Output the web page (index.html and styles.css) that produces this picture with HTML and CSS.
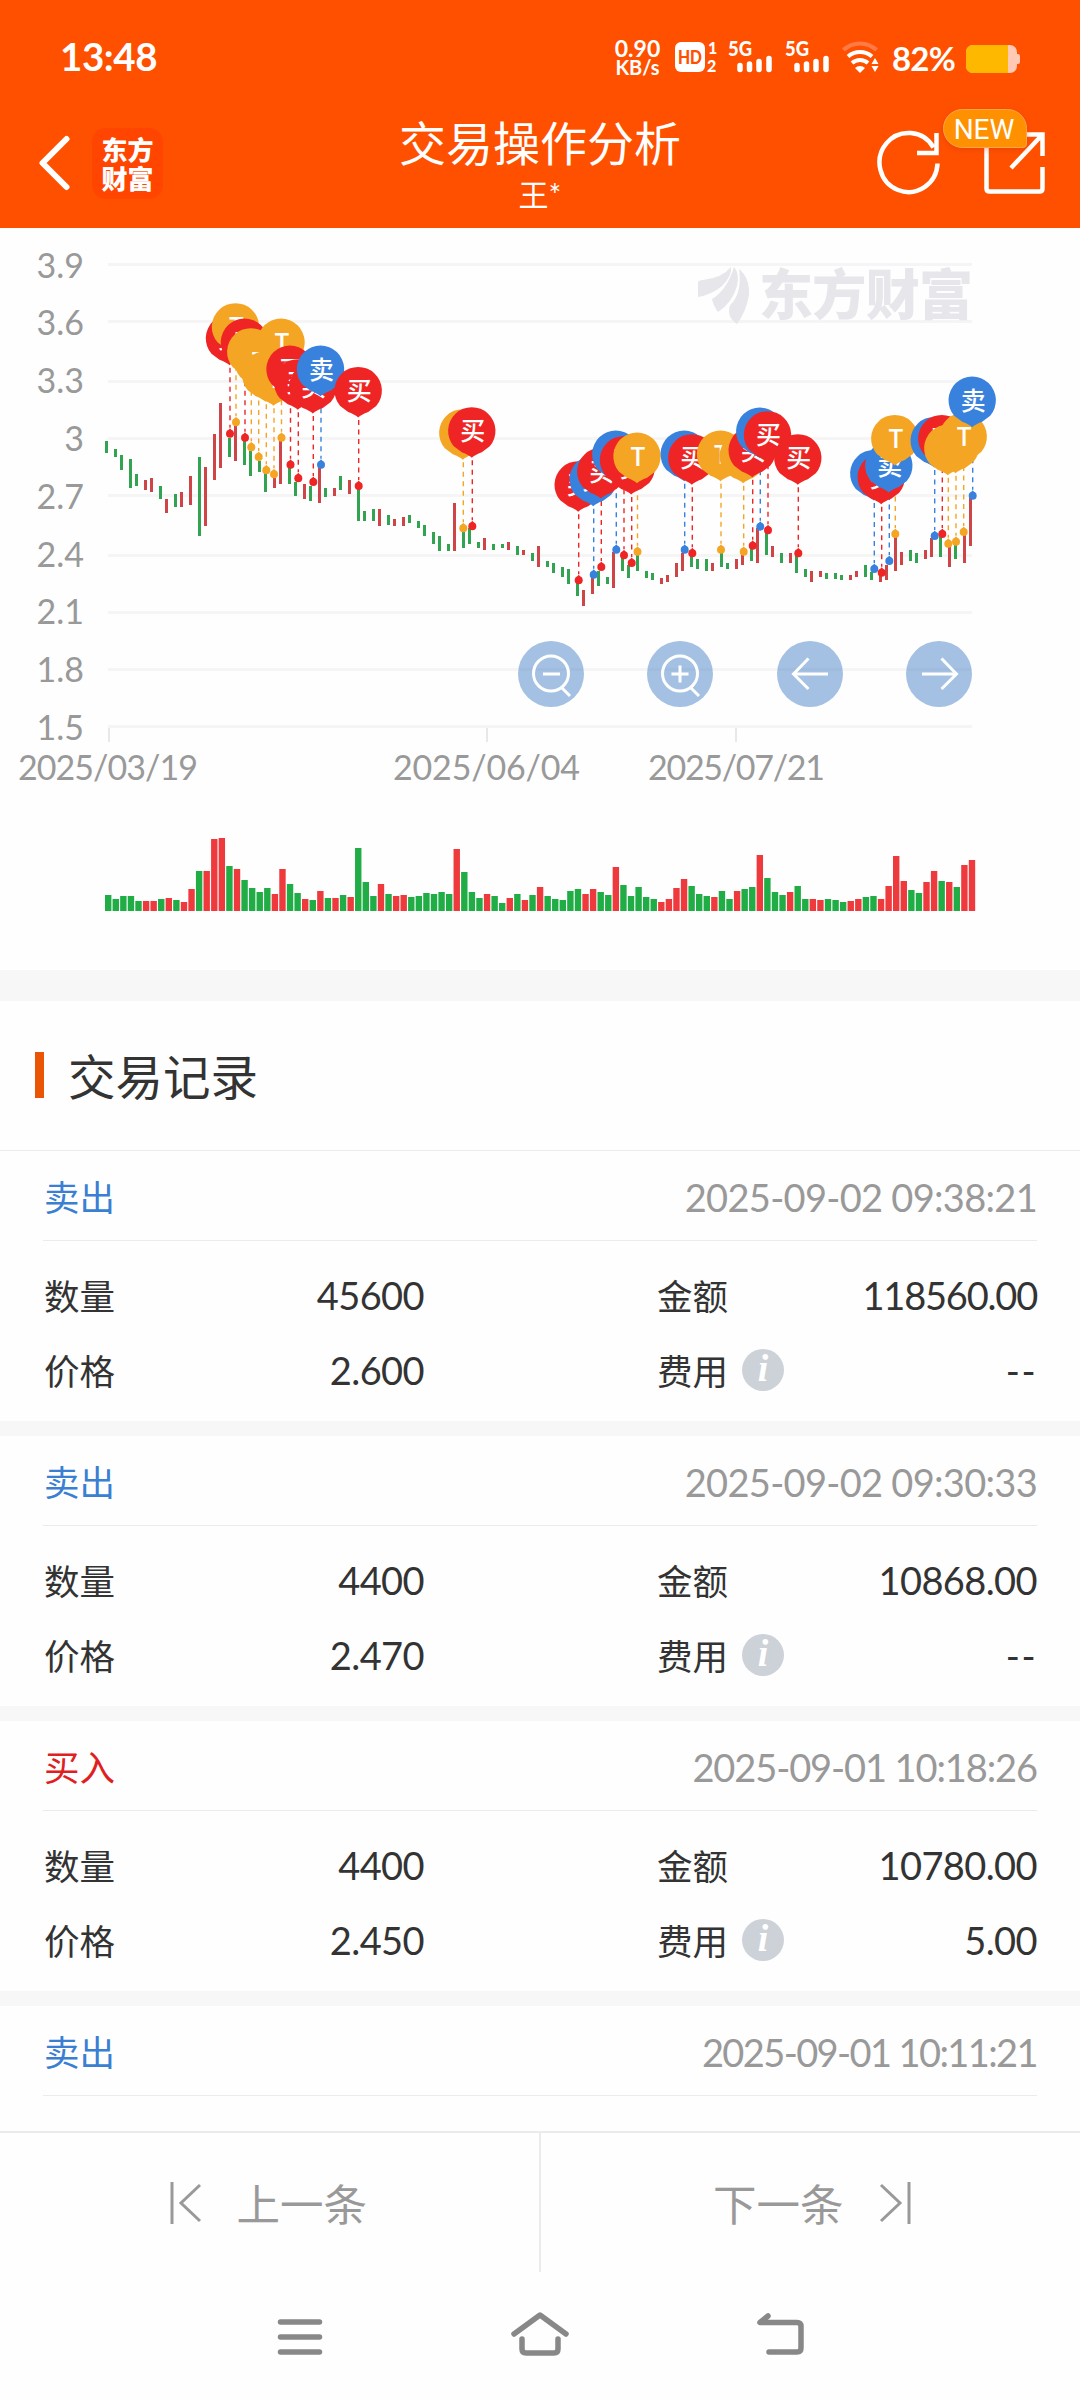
FILE: index.html
```
<!DOCTYPE html>
<html lang="zh-CN">
<head>
    <meta charset="UTF-8">
    <meta name="viewport" content="width=device-width, initial-scale=1.0">
    <link rel="stylesheet" href="styles.css">
    <title>交易操作分析</title>
</head>
<body>
    <header class="header">
        <div class="status-bar">
            <span class="time">13:48</span>
            <div class="status-icons">
                <div class="net-speed"><span>0.90</span><span class="unit">KB/s</span></div>
                <svg class="icon-hd" width="44" height="32" viewBox="0 0 44 32">
                    <rect x="0" y="1" width="30" height="30" rx="6" fill="#fff"/>
                    <text x="3" y="22.500" class="hd-text" textLength="24" lengthAdjust="spacingAndGlyphs">HD</text>
                    <text x="33" y="13" class="sim-text">1</text>
                    <text x="32" y="30.500" class="sim-text">2</text>
                </svg>
                <svg class="icon-signal" width="46" height="32" viewBox="0 0 46 32">
                    <text x="0" y="15" class="g5" textLength="24" lengthAdjust="spacingAndGlyphs">5G</text>
                    <path d="M12 24.500v4M21.500 23v5.500M31 20.500v8M41 17.500v11" stroke="#fff" stroke-width="5.500" stroke-linecap="round"/>
                </svg>
                <svg class="icon-signal" width="46" height="32" viewBox="0 0 46 32">
                    <text x="0" y="15" class="g5" textLength="24" lengthAdjust="spacingAndGlyphs">5G</text>
                    <path d="M12 24.500v4M21.500 23v5.500M31 20.500v8M41 17.500v11" stroke="#fff" stroke-width="5.500" stroke-linecap="round"/>
                </svg>
                <svg class="icon-wifi" width="38" height="32" viewBox="0 0 38 32" fill="none" stroke="#fff" stroke-width="4">
                    <path d="M1.500 9a24 24 0 0 1 33 0" stroke="#ff7a45"/>
                    <path d="M6 15.500a18 18 0 0 1 24 0"/>
                    <path d="M10 22a12 12 0 0 1 16 0"/>
                    <path d="M13 27a7 7 0 0 1 10 0l-5 5z" fill="#fff" stroke="none"/>
                    <path d="M29.500 23l3.500-6 3.500 6zM29.500 25l3.500 6 3.500-6z" fill="#fff" stroke="none"/>
                </svg>
                <span class="percent">82%</span>
                <svg class="icon-battery" width="54" height="28" viewBox="0 0 54 28">
                    <rect width="51" height="28" rx="7" fill="#ffc9b3"/>
                    <rect x="49" y="9" width="5" height="10" rx="2" fill="#ffc9b3"/>
                    <path d="M7 0h35v28H7a7 7 0 0 1-7-7V7a7 7 0 0 1 7-7z" fill="#ffb800"/>
                </svg>
            </div>
        </div>
        <div class="title-bar">
            <div class="title-left">
                <svg width="32" height="56" viewBox="0 0 32 56" fill="none" stroke="#fff" stroke-width="6" stroke-linecap="round" stroke-linejoin="round">
                    <path d="M28.500 4L4.500 28l24 24"/>
                </svg>
                <div class="logo"><span>东方</span><span>财富</span></div>
            </div>
            <div class="title-center">
                <h1>交易操作分析</h1>
                <p>王*</p>
            </div>
            <div class="title-right">
                <svg width="66" height="66" viewBox="0 0 66 66" fill="none" stroke="#fff" stroke-width="4.500">
                    <path d="M61.500 34.500a29 29.500 0 1 1-4-16"/>
                    <path d="M60.500 4v20H41"/>
                </svg>
                <div class="share">
                    <svg width="62" height="62" viewBox="0 0 62 62" fill="none" stroke="#fff" stroke-width="4.500">
                        <path d="M2.500 4v52.500q0 3 3 3h50q3 0 3-3V35"/>
                        <path d="M40 2.500h18.500V24M58.500 2.500L27 36"/>
                    </svg>
                    <span class="badge">NEW</span>
                </div>
            </div>
        </div>
    </header>

    <section class="chart">
        <svg id="kline" width="1080" height="742" viewBox="0 228 1080 742"></svg>
        <div class="controls">
            <button class="ctrl"><svg width="66" height="66" viewBox="0 0 66 66"><circle cx="33" cy="32.500" r="17.500"/><path d="M25 33h17M44 47l8 8"/></svg></button>
            <button class="ctrl"><svg width="66" height="66" viewBox="0 0 66 66"><circle cx="33" cy="32.500" r="17.500"/><path d="M24.500 33h17M33 24.500v17M44 47l8 8"/></svg></button>
            <button class="ctrl"><svg width="66" height="66" viewBox="0 0 66 66"><path d="M51 33H17M31.500 17.500L16.500 33l15 15"/></svg></button>
            <button class="ctrl"><svg width="66" height="66" viewBox="0 0 66 66"><path d="M16 33h34M35.500 17.500L50.500 33l-15 15"/></svg></button>
        </div>
    </section>

    <main class="records">
        <h2 class="section-title">交易记录</h2>

        <article class="record">
            <div class="record-head"><span class="sell">卖出</span><time>2025-09-02 09:38:21</time></div>
            <div class="record-body">
                <div class="cell"><span>数量</span><b>45600</b></div>
                <div class="cell"><span>金额</span><b class="tight">118560.00</b></div>
                <div class="cell"><span>价格</span><b>2.600</b></div>
                <div class="cell"><span>费用<i class="info">i</i></span><b class="empty">--</b></div>
            </div>
        </article>

        <article class="record">
            <div class="record-head"><span class="sell">卖出</span><time>2025-09-02 09:30:33</time></div>
            <div class="record-body">
                <div class="cell"><span>数量</span><b>4400</b></div>
                <div class="cell"><span>金额</span><b>10868.00</b></div>
                <div class="cell"><span>价格</span><b>2.470</b></div>
                <div class="cell"><span>费用<i class="info">i</i></span><b class="empty">--</b></div>
            </div>
        </article>

        <article class="record">
            <div class="record-head"><span class="buy">买入</span><time class="tight">2025-09-01 10:18:26</time></div>
            <div class="record-body">
                <div class="cell"><span>数量</span><b>4400</b></div>
                <div class="cell"><span>金额</span><b>10780.00</b></div>
                <div class="cell"><span>价格</span><b>2.450</b></div>
                <div class="cell"><span>费用<i class="info">i</i></span><b>5.00</b></div>
            </div>
        </article>

        <article class="record">
            <div class="record-head"><span class="sell">卖出</span><time class="tighter">2025-09-01 10:11:21</time></div>
        </article>
    </main>

    <footer class="pager">
        <a class="page-btn">
            <svg width="32" height="44" viewBox="0 0 32 44"><path d="M2 1v42M30 4L11 22l19 18"/></svg>
            <span>上一条</span>
        </a>
        <a class="page-btn">
            <span>下一条</span>
            <svg width="32" height="44" viewBox="0 0 32 44"><path d="M30 1v42M2 4l19 18L2 40"/></svg>
        </a>
    </footer>

    <nav class="sys-nav">
        <svg width="60" height="50" viewBox="0 0 60 50"><path d="M10.500 12h39M10.500 27h39M10.500 42h39"/></svg>
        <svg width="60" height="50" viewBox="0 0 60 50"><path d="M4 24L30 5l26 19M12 29v10q0 4 4 4h28q4 0 4-4V29"/></svg>
        <svg width="60" height="50" viewBox="0 0 60 50"><path d="M18 6l-8 6.500h37q4 0 4 4V38q0 4-4 4H19"/></svg>
    </nav>

    <script src="script.js"></script>
</body>
</html>
```

FILE: styles.css
```
* {
    box-sizing: border-box;
}

body {
    margin: 0;
    width: 1080px;
    height: 2400px;
    overflow: hidden;
    display: flex;
    flex-direction: column;
    background-color: #fefefe;
    color: #333;
    font-family: Lato, "Noto Sans CJK SC", sans-serif;
}

h1, h2, p {
    margin: 0;
    font-weight: normal;
}

/* header */
.header {
    height: 228px;
    flex-shrink: 0;
    background-color: #ff5000;
    color: #fff;
}

.status-bar {
    height: 116px;
    padding: 0 60px 2px 60px;
    display: flex;
    justify-content: space-between;
    align-items: center;
}

.time {
    font-size: 38.5px;
    font-weight: bold;
    letter-spacing: -0.4px;
    padding-bottom: 2px;
}

.status-icons {
    display: flex;
    align-items: center;
}

.status-icons svg {
    overflow: visible;
}

.net-speed {
    display: flex;
    flex-direction: column;
    align-items: center;
    width: 47px;
    margin-right: 14px;
    font-size: 23px;
    font-weight: bold;
    line-height: 19px;
}

.net-speed .unit {
    font-size: 20px;
    line-height: 18px;
}

.icon-hd {
    margin-right: 9px;
}

.icon-signal {
    margin-right: 11px;
}

.icon-signal + .icon-wifi {
    margin-left: 0;
}

.sim-text {
    font: 900 16px Lato, sans-serif;
    fill: #fff;
}

.g5 {
    font: 900 20px Lato, sans-serif;
    fill: #fff;
}

.hd-text {
    font: 900 19px Lato, sans-serif;
    fill: #ff5000;
}

.percent {
    margin: 1px 10px 0 12px;
    width: 64px;
    font-size: 33px;
    font-weight: bold;
    letter-spacing: -0.8px;
    white-space: nowrap;
}

.icon-battery {
    margin-top: 3px;
}

.title-bar {
    height: 112px;
    padding: 0 34px 0 38px;
    display: grid;
    grid-template-columns: 300px 1fr 300px;
}

.title-left {
    display: flex;
    align-items: center;
    gap: 22px;
    padding-bottom: 18px;
}

.logo {
    width: 71px;
    height: 71px;
    border-radius: 14px;
    background-color: #ff4500;
    display: flex;
    flex-direction: column;
    align-items: center;
    justify-content: center;
    font-family: "Noto Sans CJK SC", sans-serif;
    font-size: 26px;
    font-weight: 900;
    line-height: 29px;
}

.title-center {
    margin-left: -4px;
    text-align: center;
}

.title-center h1 {
    font-size: 47px;
    line-height: 54px;
}

.title-center p {
    font-size: 30px;
    line-height: 34px;
    margin-top: 7px;
}

.title-right {
    display: flex;
    justify-content: flex-end;
    gap: 42px;
    padding-top: 13px;
}

.share {
    position: relative;
    padding-top: 3px;
}

.badge {
    position: absolute;
    right: 19px;
    top: -20px;
    width: 84px;
    height: 39px;
    border: 1px solid #ffa54d;
    border-radius: 20px 20px 4px 20px;
    background-color: #ff9100;
    box-shadow: 0 2px 5px rgba(200, 50, 0, 0.3);
    font-family: Roboto, sans-serif;
    font-size: 28px;
    line-height: 39px;
    text-align: center;
    text-indent: -2px;
}

/* chart */
.chart {
    position: relative;
    height: 742px;
    flex-shrink: 0;
}

.chart svg {
    display: block;
}

.grid {
    stroke: #f5f5f5;
    stroke-width: 3;
}

.tick {
    stroke: #e8e8e8;
    stroke-width: 2;
}

.axis-label {
    font-size: 34px;
    fill: #999;
}

.watermark {
    font: 900 54px "Noto Sans CJK SC", sans-serif;
    fill: #e6e6eb;
}

.pin-text {
    font: 500 25px "Noto Sans CJK SC", sans-serif;
    fill: #fff;
    text-anchor: middle;
}

.controls {
    position: absolute;
    left: 518px;
    top: 413px;
    display: flex;
    gap: 63.3px;
}

.ctrl {
    width: 66px;
    height: 66px;
    padding: 0;
    border: none;
    border-radius: 50%;
    background-color: rgba(73, 132, 200, 0.5);
}

.ctrl svg {
    fill: none;
    stroke: #fff;
    stroke-width: 3;
}

/* records */
.records {
    height: 1161px;
    flex-shrink: 0;
    overflow: hidden;
    border-top: 31px solid #f7f7f7;
}

.section-title {
    height: 150px;
    padding: 0 0 2px 35px;
    border-bottom: 1px solid #ebebeb;
    display: flex;
    align-items: center;
    gap: 24px;
    font-size: 47.5px;
}

.section-title::before {
    content: "";
    width: 9px;
    height: 46px;
    background-color: #e95504;
}

.record {
    height: 285px;
    padding: 0 43px;
    border-bottom: 15px solid #f7f7f7;
}

.record-head {
    height: 90px;
    border-bottom: 1px solid #ebebeb;
    display: flex;
    justify-content: space-between;
    align-items: center;
    font-size: 35.5px;
}

.record-head span {
    padding-left: 1px;
}

.record-head time {
    font-size: 38px;
    letter-spacing: -0.7px;
    padding-top: 2px;
    color: #999;
}

.record-head .tight {
    letter-spacing: -1.1px;
}

.record-head .tighter {
    letter-spacing: -1.6px;
}

.sell {
    color: #3a7fd2;
}

.buy {
    color: #e02020;
}

.record-body {
    padding-top: 16px;
    display: grid;
    grid-template-columns: 381px 381px;
    grid-auto-rows: 75px;
    justify-content: space-between;
}

.cell {
    display: flex;
    justify-content: space-between;
    align-items: center;
    font-size: 35.5px;
}

.cell span {
    display: flex;
    align-items: center;
    padding-left: 1px;
}

.cell b {
    font-size: 38px;
    font-weight: normal;
    letter-spacing: -0.6px;
}

.cell .tight {
    letter-spacing: -1.2px;
}

.cell .empty {
    letter-spacing: 1.5px;
}

.info {
    width: 42px;
    height: 42px;
    margin-left: 14px;
    border-radius: 50%;
    background-color: #cdd1d8;
    color: #fff;
    font: italic bold 38px/39px "Liberation Serif", serif;
    text-align: center;
}

/* bottom */
.pager {
    height: 141px;
    flex-shrink: 0;
    border-top: 2px solid #ebebeb;
    display: flex;
    color: #999;
}

.page-btn {
    flex: 1;
    display: flex;
    justify-content: center;
    align-items: center;
    gap: 35px;
    font-size: 43.5px;
}

.page-btn:first-child {
    padding-right: 2px;
}

.page-btn + .page-btn {
    border-left: 2px solid #ebebeb;
    padding-left: 3px;
}

.page-btn svg {
    fill: none;
    stroke: #999;
    stroke-width: 3;
}

.sys-nav {
    flex: 1;
    display: flex;
    justify-content: center;
    gap: 180px;
    padding-top: 38px;
}

.sys-nav svg {
    fill: none;
    stroke: #888;
    stroke-width: 5.5;
    stroke-linecap: round;
    stroke-linejoin: round;
}
```

FILE: script.js
```
const svg = document.getElementById('kline');
const NS = 'http://www.w3.org/2000/svg';

function add(tag, attrs, text) {
    const el = document.createElementNS(NS, tag);
    for (const key in attrs) el.setAttribute(key, attrs[key]);
    if (text) el.textContent = text;
    svg.appendChild(el);
}

const STEP = 7.577;

// price axis
const levels = [['3.9', 264.5], ['3.6', 321.5], ['3.3', 381.5], ['3', 438.5], ['2.7', 495.5], ['2.4', 555.5], ['2.1', 612.5], ['1.8', 669.5], ['1.5', 726.5]];
levels.forEach(([label, y], i) => {
    add('line', { class: 'grid', x1: 108, x2: 972, y1: y, y2: y });
    add('text', { class: 'axis-label', x: 84, y: 277.5 + i * 57.8, 'text-anchor': 'end' }, label);
});

// dates
[['2025/03/19', 109, 18, 180], ['2025/06/04', 487, 393, 187], ['2025/07/21', 736, 648, 177]].forEach(([label, tick, x, w]) => {
    add('line', { class: 'tick', x1: tick, x2: tick, y1: 728, y2: 742 });
    add('text', { class: 'axis-label', x: x, y: 780, textLength: w }, label);
});

// watermark
add('path', { fill: '#e6e6eb', d: 'M698 297V282Q699 280 703 280Q722 278 731 267Q732 276 722 286Q711 295 698 297zM712 299Q727 290 734 267Q740 274 737 286Q732 303 718 312Q713 305 712 299zM729 311Q729 305 733 302Q742 290 739 269Q750 278 749 295Q746 312 737 324Q729 319 729 311z' });
add('text', { class: 'watermark', x: 759, y: 315, textLength: 214 }, '东方财富');

// [high, low] in px
const bars = [
    [441, 453], [449, 457], [455, 470], [459, 488], [474, 486], [480, 490], [478, 492], [486, 499], [499, 513], [494, 507],
    [492, 507], [476, 505], [457, 536], [467, 526], [434, 480], [403, 468], [438, 457], [425, 461], [441, 465], [451, 476],
    [461, 472], [473, 492], [477, 488], [441, 484], [468, 484], [482, 496], [484, 499], [486, 501], [468, 503], [488, 497],
    [488, 496], [476, 490], [480, 494], [489, 521], [511, 521], [509, 521], [509, 526], [515, 525], [519, 526], [517, 526],
    [515, 523], [521, 528], [525, 536], [532, 544], [536, 551], [544, 551], [503, 551], [531, 548], [528, 544], [542, 548],
    [538, 550], [544, 550], [544, 548], [542, 550], [546, 555], [550, 555], [553, 561], [546, 567], [561, 567], [563, 573],
    [567, 577], [569, 584], [583, 596], [590, 606], [577, 594], [571, 586], [577, 584], [552, 588], [558, 571], [565, 578],
    [554, 571], [571, 578], [573, 580], [578, 584], [575, 582], [563, 577], [553, 571], [556, 567], [559, 569], [559, 571],
    [563, 571], [553, 567], [563, 569], [559, 569], [554, 565], [548, 561], [528, 563], [533, 555], [546, 557], [553, 563],
    [553, 563], [556, 573], [569, 577], [571, 582], [571, 577], [573, 579], [573, 579], [575, 580], [575, 580], [571, 577],
    [565, 577], [572, 580], [575, 582], [565, 580], [536, 571], [552, 565], [550, 561], [553, 563], [550, 559], [538, 557],
    [537, 557], [547, 567], [545, 559], [535, 563], [498, 546]
];

const volumes = [
    16, 12, 15, 15, 10, 10, 10, 12, 13, 11, 9, 22, 40, 40, 72, 73, 45, 42, 31, 23,
    19, 23, 17, 42, 27, 18, 12, 11, 20, 13, 13, 16, 14, 63, 29, 15, 27, 17, 15, 16,
    14, 15, 18, 17, 19, 17, 62, 39, 19, 13, 17, 15, 8, 13, 17, 11, 16, 24, 15, 12,
    11, 20, 22, 17, 22, 19, 16, 44, 26, 15, 24, 14, 12, 9, 12, 23, 32, 25, 17, 15,
    14, 20, 12, 20, 22, 24, 56, 33, 19, 16, 19, 25, 12, 12, 11, 12, 11, 9, 10, 12,
    14, 15, 12, 25, 55, 30, 21, 18, 29, 40, 30, 29, 24, 46, 51
];

// indexes of the rising days, everything else is green
const up = [5, 6, 8, 10, 11, 13, 14, 15, 17, 22, 23, 26, 28, 30, 32, 36, 38, 39, 46, 50, 53, 55, 57, 63, 64, 67, 73, 74, 75, 76, 80, 83, 86, 90, 93, 94, 98, 99, 102, 103, 104, 105, 108, 109, 111, 113, 114];
const upPriceOnly = [84, 88];

bars.forEach(([top, bottom], i) => {
    const x = Math.round((105.6 + i * STEP) / 3) * 3;
    const rising = up.includes(i) || upPriceOnly.includes(i);
    add('rect', { x: x, y: top, width: 3, height: bottom - top, fill: rising ? '#cf4547' : '#32a351' });
});

volumes.forEach((h, i) => {
    add('rect', { x: 105 + i * STEP, y: 911 - h, width: 6.4, height: h, fill: up.includes(i) ? '#ef3a3d' : '#20ad45' });
});

// trade pins: [x, y of the dot, type]
const pins = [
    [230, 433.7, 'buy'], [236, 422.3, 't'], [245, 437.7, 'buy'], [251.3, 447.3, 't'], [258.7, 457, 't'], [266.3, 470.3, 't'],
    [274, 474.3, 't'], [281.5, 437.7, 't'], [290.5, 464.7, 'buy'], [298.3, 478.3, 'buy'], [313.3, 482, 'buy'], [321, 464.7, 'sell'],
    [358.7, 486, 'buy'], [463.3, 528.3, 't'], [472.3, 526.3, 'buy'], [578.7, 580.3, 'buy'], [593.7, 574.7, 'sell'],
    [601.3, 567, 'buy'], [616.3, 549.7, 'sell'], [624, 555.3, 'buy'], [631.7, 563, 'buy'], [637.5, 551.7, 't'],
    [684.7, 549.7, 'sell'], [692.3, 553.3, 'buy'], [721, 549.7, 't'], [743.7, 551.7, 't'], [752.7, 545.7, 'buy'],
    [760.3, 526.7, 'sell'], [768, 530.3, 'buy'], [798.3, 553.3, 'buy'], [874.3, 569, 'sell'], [881.7, 572.7, 'buy'],
    [889.3, 561, 'sell'], [895.3, 534, 't'], [934.7, 536, 'sell'], [942.3, 534, 'buy'], [948.3, 543.7, 't'],
    [956, 541.7, 't'], [963.7, 532, 't'], [972.7, 495.7, 'sell']
];
const types = { buy: ['#ee2524', '买'], sell: ['#3882de', '卖'], t: ['#f5a524', 'T'] };

pins.forEach(([x, y, type]) => {
    const color = types[type][0];
    add('line', { x1: x, x2: x, y1: y - 66, y2: y - 6, stroke: color, 'stroke-width': 1.4, 'stroke-dasharray': '5 4.5' });
    add('path', { d: `M${x} ${y - 5.5}L${x + 3} ${y - 2}H${x - 3}z`, fill: color });
    add('circle', { cx: x, cy: y, r: 4, fill: color });
});

pins.forEach(([x, y, type]) => {
    const cx = x - 0.5, cy = y - 95.5;
    add('path', { d: `M${cx} ${cy + 27}Q${cx - 3} ${cy + 24} ${cx - 10} ${cy + 21.5}L${cx - 18} ${cy + 15.5}A23.7 23.7 0 1 1 ${cx + 18} ${cy + 15.5}L${cx + 10} ${cy + 21.5}Q${cx + 3} ${cy + 24} ${cx} ${cy + 27}z`, fill: types[type][0] });
    add('text', { class: 'pin-text', x: cx + 1, y: cy + 9.5 }, types[type][1]);
});
```
